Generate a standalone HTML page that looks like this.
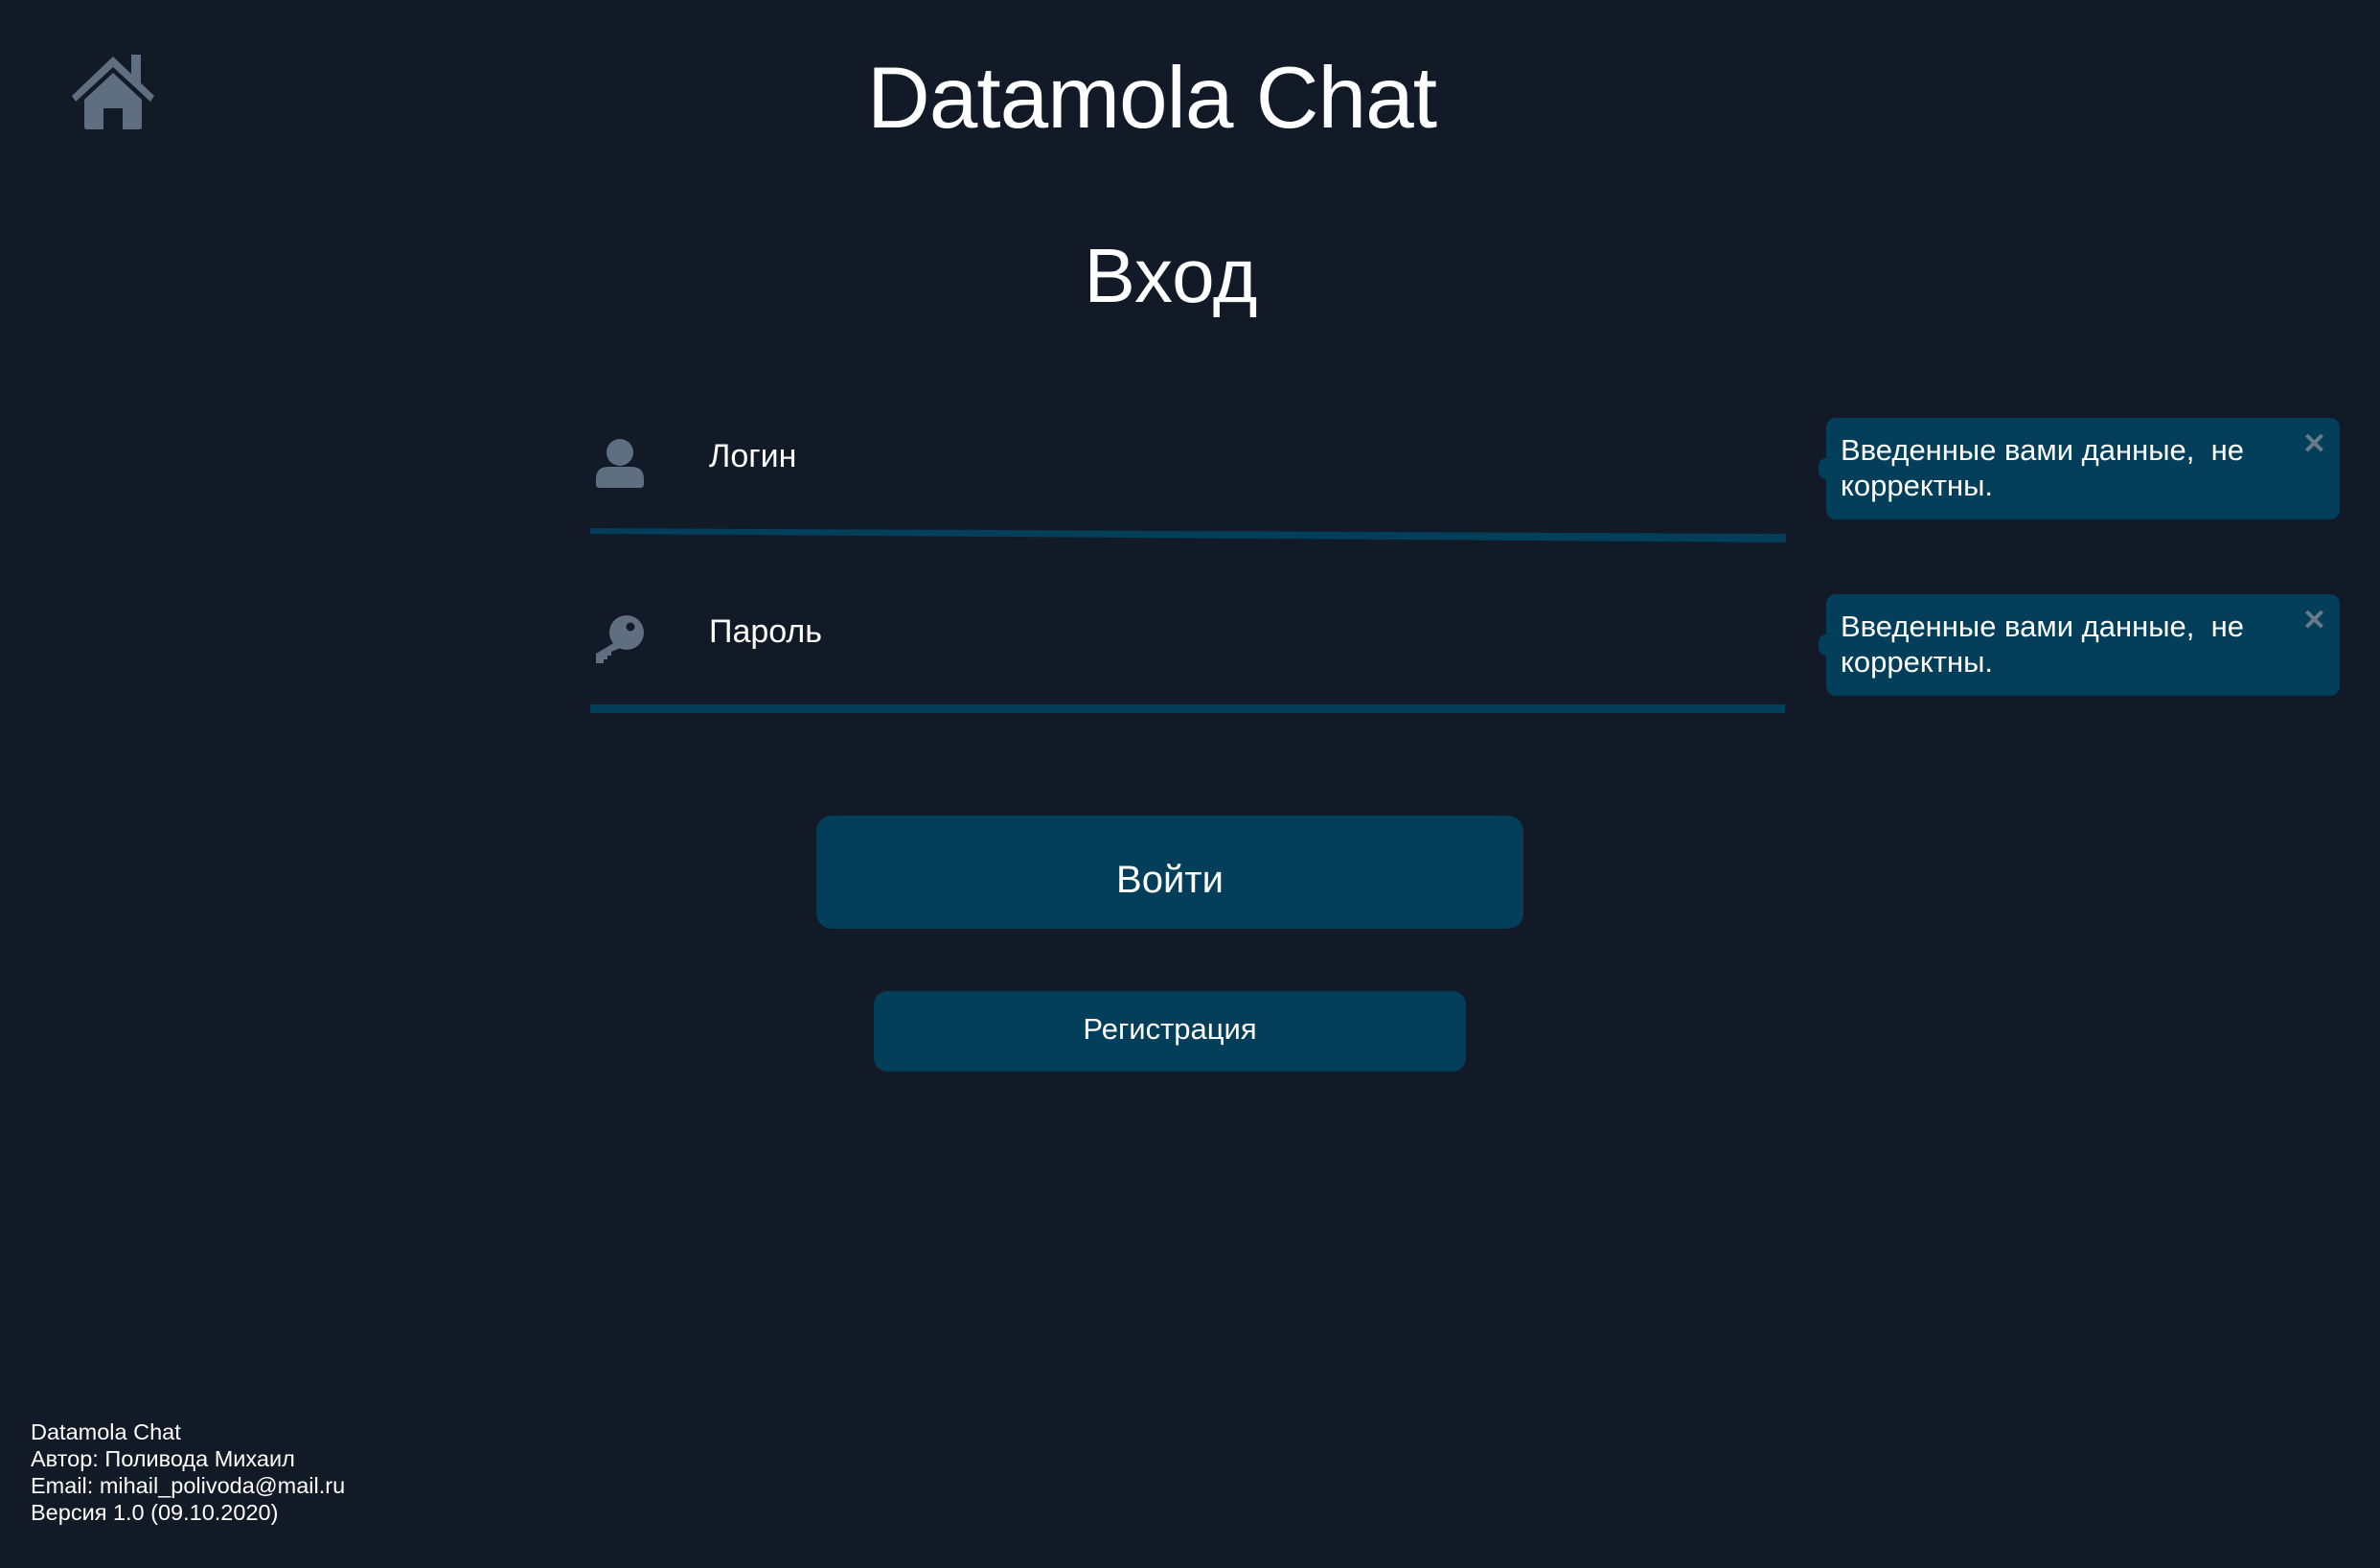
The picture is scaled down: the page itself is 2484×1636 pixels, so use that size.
<!DOCTYPE html>
<html><head><meta charset="utf-8"><style>
html,body{margin:0;padding:0;background:#111a26;width:2484px;height:1636px;overflow:hidden;font-family:"Liberation Sans",sans-serif;color:#fff}
.a{position:absolute;white-space:nowrap}
.tip{position:absolute;left:1906px;width:536px;height:106px;background:#033f5a;border-radius:10px}
.tip .t{position:absolute;left:15px;top:15px;font-size:31px;line-height:37px;color:#fff}
.tip .x{position:absolute;right:14px;top:10px;font-size:30px;color:#6b7a8a;font-weight:bold}
.tip:before{content:"";position:absolute;left:-8px;top:42px;width:16px;height:22px;background:#033f5a;border-radius:8px}
.btn{position:absolute;background:#033f5a;display:flex;align-items:center;justify-content:center;color:#fff}
</style></head><body>
<svg class="a" style="left:73px;top:55px" width="91" height="81" viewBox="0 0 91 81">
<path d="M2 45 L45 4 L88 45 L84 51 L45 15 L6 51 Z" fill="#5f6e80"/>
<rect x="64" y="2" width="10" height="30" fill="#5f6e80"/>
<path d="M15 49 L45 21 L75 49 L75 77 Q75 80 72 80 L55 80 L55 58 L35 58 L35 80 L18 80 Q15 80 15 77 Z" fill="#5f6e80"/>
</svg>
<div class="a" style="left:905px;top:57px;width:594px;text-align:center;font-size:91px;line-height:91px;letter-spacing:-1px">Datamola Chat</div>
<div class="a" style="left:1122px;top:248px;width:200px;text-align:center;font-size:80px;line-height:80px">Вход</div>

<svg class="a" style="left:622px;top:458px" width="50" height="51" viewBox="0 0 50 51">
<circle cx="25" cy="14" r="14" fill="#5f6e80"/>
<path d="M0 42 Q0 29 13 29 L37 29 Q50 29 50 42 L50 47 Q50 51 46 51 L4 51 Q0 51 0 47 Z" fill="#5f6e80"/>
</svg>
<div class="a" style="left:740px;top:459px;font-size:34px;line-height:34px">Логин</div>
<svg class="a" style="left:614px;top:548px" width="1250" height="20"><polygon points="2,3 1250,9 1250,18 2,9" fill="#033f5a"/></svg>

<svg class="a" style="left:622px;top:642px" width="50" height="50" viewBox="0 0 50 50">
<circle cx="32" cy="18" r="18" fill="#5f6e80"/>
<circle cx="36" cy="12" r="4.5" fill="#111a26"/>
<path d="M20 28 L0 40 L0 50 L8 50 L8 46 L12 46 L12 42 L16 42 L16 38 L26 34 Z" fill="#5f6e80"/>
</svg>
<div class="a" style="left:740px;top:642px;font-size:34px;line-height:34px">Пароль</div>
<div class="a" style="left:616px;top:735px;width:1247px;height:9px;background:#033f5a"></div>

<div class="tip" style="top:436px"><div class="t">Введенные вами данные,&nbsp; не<br>корректны.</div><div class="x">✕</div></div>
<div class="tip" style="top:620px"><div class="t">Введенные вами данные,&nbsp; не<br>корректны.</div><div class="x">✕</div></div>

<div class="btn" style="left:852px;top:851px;width:738px;height:118px;border-radius:16px;font-size:40px"><span style="position:relative;top:8px">Войти</span></div>
<div class="btn" style="left:912px;top:1034px;width:618px;height:84px;border-radius:14px;font-size:31px"><span style="position:relative;top:-2px">Регистрация</span></div>

<div class="a" style="left:32px;top:1480px;font-size:23.5px;line-height:28px">Datamola Chat<br>Автор: Поливода Михаил<br>Email: mihail_polivoda@mail.ru<br>Версия 1.0 (09.10.2020)</div>
</body></html>
